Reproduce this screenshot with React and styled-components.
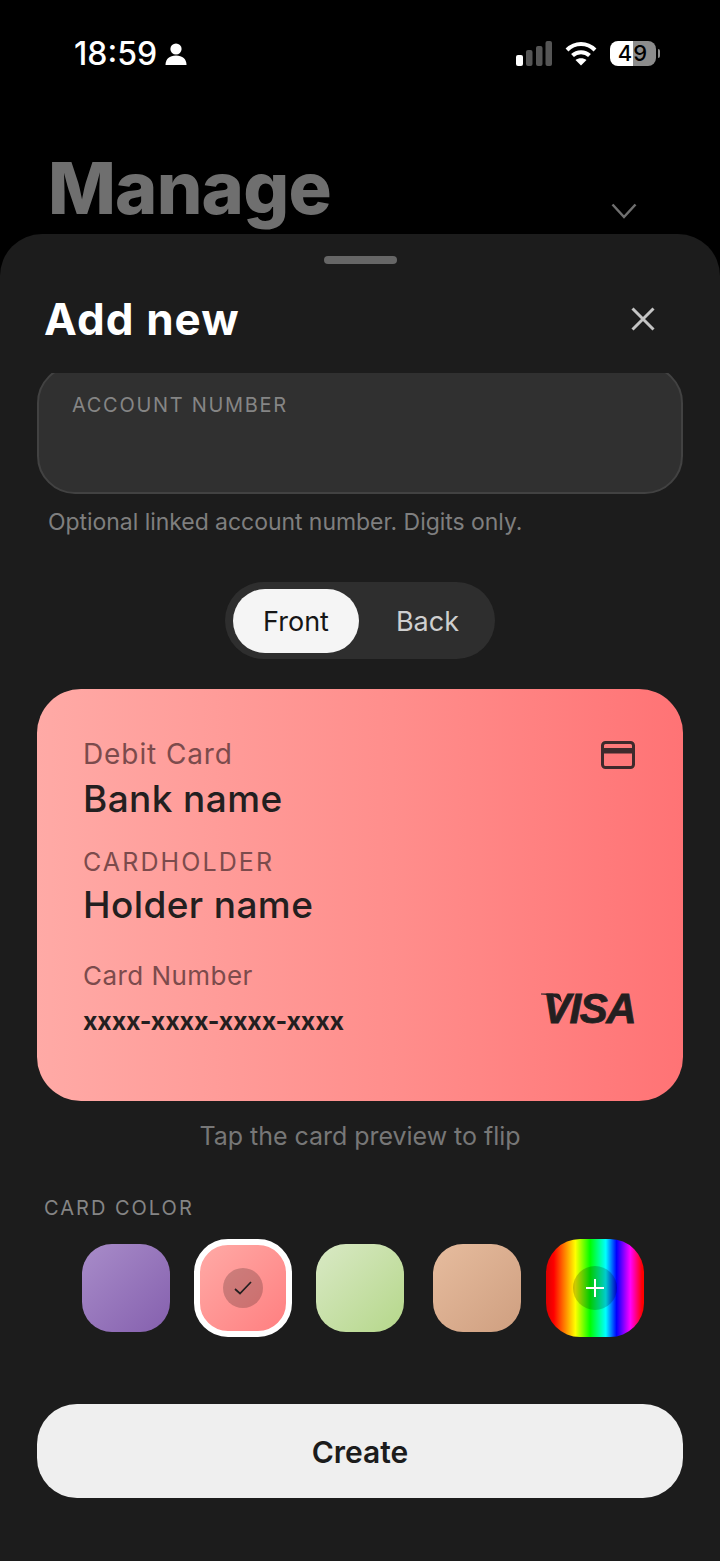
import styled, { createGlobalStyle } from "styled-components";

const GlobalStyle = createGlobalStyle`
  html, body {
    margin: 0;
    padding: 0;
    background: #000;
  }
  * {
    box-sizing: border-box;
  }
`;

const font = `Inter, "Noto Sans", sans-serif`;

const Screen = styled.div`
  position: relative;
  width: 720px;
  height: 1561px;
  overflow: hidden;
  background: #000;
  font-family: ${font};
`;

const StatusBar = styled.div`
  height: 106px;
  padding: 35px 64px 0 74px;
  display: flex;
  align-items: flex-start;
  justify-content: space-between;
`;

const TimeGroup = styled.div`
  display: flex;
  align-items: center;
  gap: 8px;
`;

const Time = styled.span`
  font-size: 32px;
  line-height: 38px;
  font-weight: 500;
  color: #fff;
`;

const StatusIcons = styled.div`
  display: flex;
  align-items: center;
  gap: 13px;
  height: 36px;
`;

const Battery = styled.div`
  position: relative;
  width: 46px;
  height: 25px;
  border-radius: 8px;
  background: linear-gradient(90deg, #fff 0 50%, #8c8c8c 50% 100%);
  color: #000;
  font-size: 22px;
  font-weight: 500;
  line-height: 25px;
  letter-spacing: 1px;
  text-align: center;

  &::after {
    content: "";
    position: absolute;
    right: -4px;
    top: 8px;
    width: 2px;
    height: 9px;
    border-radius: 0 2px 2px 0;
    background: #8c8c8c;
  }
`;

const PageHeader = styled.div`
  padding: 37px 83px 0 48px;
  display: flex;
  justify-content: space-between;
  align-items: flex-end;
`;

const PageTitle = styled.h1`
  margin: 0;
  font-size: 72px;
  line-height: 90px;
  font-weight: 800;
  letter-spacing: -0.800px;
  color: #6f6f6f;
`;

const Chevron = styled.svg`
  margin-bottom: 14px;
`;

const Sheet = styled.div`
  position: absolute;
  top: 234px;
  left: 0;
  right: 0;
  bottom: 0;
  background: #1c1c1c;
  border-radius: 42px 42px 0 0;
  display: flex;
  flex-direction: column;
`;

const Handle = styled.div`
  align-self: center;
  width: 73px;
  height: 8px;
  margin-top: 22px;
  border-radius: 4px;
  background: #666;
`;

const SheetHeader = styled.div`
  display: flex;
  align-items: center;
  justify-content: space-between;
  padding: 28px 65px 0 44px;
`;

const SheetTitle = styled.h2`
  margin: 0;
  font-size: 44px;
  line-height: 54px;
  font-weight: 700;
  letter-spacing: 1.100px;
  color: #fff;
`;

const Scroll = styled.div`
  margin-top: 27px;
  padding: 0 37px;
  overflow: hidden;
  flex: 1;
  display: flex;
  flex-direction: column;
`;

const Field = styled.div`
  height: 129px;
  flex: none;
  margin-top: -8px;
  padding: 26px 33px;
  background: #303030;
  border: 2px solid #424242;
  border-radius: 38px;
`;

const FieldLabel = styled.div`
  font-size: 20px;
  line-height: 24px;
  letter-spacing: 1.700px;
  color: #858585;
`;

const Hint = styled.p`
  margin: 13px 0 0 11px;
  font-size: 23px;
  line-height: 30px;
  letter-spacing: -0.050px;
  color: #7f7f7f;
`;

const Toggle = styled.div`
  align-self: center;
  margin-top: 45px;
  width: 270px;
  height: 77px;
  padding: 7px 8px;
  display: flex;
  align-items: stretch;
  border-radius: 39px;
  background: #2e2e2e;
`;

const ToggleOption = styled.div`
  width: ${(p) => (p.$active ? "126px" : "128px")};
  height: 64px;
  padding-left: ${(p) => (p.$active ? "0" : "9px")};
  border-radius: 32px;
  display: flex;
  align-items: center;
  justify-content: center;
  font-size: 27px;
  background: ${(p) => (p.$active ? "#f5f5f5" : "transparent")};
  color: ${(p) => (p.$active ? "#161616" : "#cfcfcf")};
`;

const Card = styled.div`
  position: relative;
  margin-top: 30px;
  height: 412px;
  flex: none;
  padding: 48px 46px 0;
  border-radius: 44px;
  background: linear-gradient(90deg, #ffaaa6 0%, #ff8e8c 55%, #ff7375 100%);
  color: #231f20;
`;

const CardIcon = styled.svg`
  position: absolute;
  top: 52px;
  right: 48px;
`;

const CardLabel = styled.div`
  font-size: ${(p) => p.$size || 28}px;
  line-height: 34px;
  letter-spacing: ${(p) => p.$spacing || 0}px;
  margin-top: ${(p) => p.$top || 0}px;
  color: #7c4b4c;
`;

const CardValue = styled.div`
  font-size: 37px;
  line-height: 44px;
  font-weight: 500;
  letter-spacing: 0.400px;
  margin-top: ${(p) => p.$top}px;
  color: #231f20;
`;

const CardDigits = styled.div`
  margin-top: 12px;
  font-size: 25px;
  line-height: 32px;
  font-weight: 700;
  letter-spacing: -0.150px;
  color: #231f20;
`;

const VisaMark = styled.div`
  position: absolute;
  right: 48px;
  bottom: 71px;
  height: 42px;
  font-family: "Liberation Sans", Arial, sans-serif;
  font-size: 42px;
  line-height: 42px;
  font-weight: 700;
  font-style: italic;
  letter-spacing: -1.500px;
  -webkit-text-stroke: 0.800px #231f20;
  color: #231f20;
`;

const VisaSwoosh = styled.svg`
  position: absolute;
  left: -2px;
  top: 5px;
`;

const FlipHint = styled.p`
  margin: 19px 0 0;
  text-align: center;
  font-size: 25px;
  line-height: 32px;
  letter-spacing: -0.030px;
  color: #777;
`;

const SectionLabel = styled.div`
  margin: 44px 0 0 7px;
  font-size: 20px;
  line-height: 24px;
  letter-spacing: 2px;
  color: #858585;
`;

const Swatches = styled.div`
  margin: 18px 0 0 30px;
  display: grid;
  grid-template-columns: repeat(5, 117.250px);
  justify-items: center;
  align-items: center;
  height: 100px;
`;

const Swatch = styled.div`
  width: ${(p) => (p.$big ? "98px" : "88px")};
  height: ${(p) => (p.$big ? "98px" : "88px")};
  border-radius: ${(p) => (p.$big ? "34px" : "30px")};
  border: ${(p) => (p.$selected ? "6px solid #fff" : "none")};
  background: ${(p) => p.$fill};
  display: flex;
  align-items: center;
  justify-content: center;
`;

const SwatchBadge = styled.div`
  width: ${(p) => p.$size}px;
  height: ${(p) => p.$size}px;
  border-radius: 50%;
  background: rgba(0, 0, 0, 0.2);
  display: flex;
  align-items: center;
  justify-content: center;
`;

const CreateButton = styled.button`
  position: absolute;
  left: 37px;
  right: 37px;
  bottom: 63px;
  height: 94px;
  padding-top: 3px;
  border: none;
  border-radius: 40px;
  background: #efefef;
  color: #1c1c1c;
  font-family: ${font};
  font-size: 30px;
  font-weight: 600;
`;

const swatches = [
  { fill: "linear-gradient(135deg, #a88cc9, #8560ae)" },
  { fill: "linear-gradient(135deg, #ffaaa6, #ff7f80)", selected: true },
  { fill: "linear-gradient(135deg, #d9e9c5, #b5d78a)" },
  { fill: "linear-gradient(135deg, #e6bc9e, #cf9f80)" },
  {
    fill: "linear-gradient(90deg, #d80000 0%, #ff0000 8%, #ffff00 30%, #00ff00 45%, #00ffff 61%, #0000ff 72%, #ff00ff 86%, #ff0000 98%)",
    rainbow: true,
  },
];

export default function App() {
  return (
    <Screen>
      <GlobalStyle />
      <StatusBar>
        <TimeGroup>
          <Time>18:59</Time>
          <svg width="22" height="22" viewBox="0 0 22 22" fill="#fff">
            <circle cx="11" cy="6" r="5.600" />
            <path d="M0.500 22c0-6 4-9.500 10.500-9.500s10.500 3.500 10.500 9.500z" />
          </svg>
        </TimeGroup>
        <StatusIcons>
          <svg width="36" height="25" viewBox="0 0 36 25">
            <rect x="0" y="14" width="7" height="11" rx="2" fill="#fff" />
            <rect x="10" y="9" width="6.500" height="16" rx="2" fill="#555" />
            <rect x="20" y="5" width="6.500" height="20" rx="2" fill="#555" />
            <rect x="29.500" y="0" width="6.500" height="25" rx="2" fill="#555" />
          </svg>
          <svg width="32" height="25" viewBox="0 0 32 25" fill="none" stroke="#fff" strokeWidth="4">
            <path d="M2 9 C10 1 22 1 30 9" />
            <path d="M7.500 14.500 C12 10 20 10 24.500 14.500" />
            <path d="M16 24.500 L10.500 19 C13.500 16.500 18.500 16.500 21.500 19 Z" fill="#fff" stroke="none" />
          </svg>
          <Battery>49</Battery>
        </StatusIcons>
      </StatusBar>
      <PageHeader>
        <PageTitle>Manage</PageTitle>
        <Chevron width="26" height="16" viewBox="0 0 26 16" fill="none" stroke="#6f6f6f" strokeWidth="2.500">
          <path d="M1.500 1.500 L13 14 L24.500 1.500" />
        </Chevron>
      </PageHeader>

      <Sheet>
        <Handle />
        <SheetHeader>
          <SheetTitle>Add new</SheetTitle>
          <svg width="24" height="24" viewBox="0 0 24 24" stroke="#c4c4c4" strokeWidth="3">
            <path d="M1.500 1.500 L22.500 22.500 M22.500 1.500 L1.500 22.500" />
          </svg>
        </SheetHeader>
        <Scroll>
          <Field>
            <FieldLabel>ACCOUNT NUMBER</FieldLabel>
          </Field>
          <Hint>Optional linked account number. Digits only.</Hint>
          <Toggle>
            <ToggleOption $active>Front</ToggleOption>
            <ToggleOption>Back</ToggleOption>
          </Toggle>
          <Card>
            <CardIcon width="34" height="28" viewBox="0 0 34 28">
              <rect x="1.500" y="1.500" width="31" height="25" rx="3" fill="none" stroke="#3f2a2c" strokeWidth="3" />
              <rect x="2" y="7" width="30" height="5.500" fill="#3f2a2c" />
            </CardIcon>
            <CardLabel $spacing={0.9}>Debit Card</CardLabel>
            <CardValue $top={6}>Bank name</CardValue>
            <CardLabel $size={25} $spacing={2.1} $top={24}>CARDHOLDER</CardLabel>
            <CardValue $top={4}>Holder name</CardValue>
            <CardLabel $size={26} $spacing={0.45} $top={32}>Card Number</CardLabel>
            <CardDigits>xxxx-xxxx-xxxx-xxxx</CardDigits>
            <VisaMark>
              <VisaSwoosh width="22" height="10" viewBox="0 0 24 10" fill="#231f20">
                <path d="M0 0 H17 C20 0 21 1.500 21.500 4 L23 10 C19 5 12 1.500 0 1.200 Z" />
              </VisaSwoosh>
              VISA
            </VisaMark>
          </Card>
          <FlipHint>Tap the card preview to flip</FlipHint>
          <SectionLabel>CARD COLOR</SectionLabel>
          <Swatches>
            {swatches.map((s, i) => (
              <Swatch key={i} $fill={s.fill} $selected={s.selected} $big={s.selected || s.rainbow}>
                {s.selected && (
                  <SwatchBadge $size={40}>
                    <svg width="18" height="14" viewBox="0 0 18 14" fill="none" stroke="#231f20" strokeWidth="1.700">
                      <path d="M1 8 L6 12.500 L17 1" />
                    </svg>
                  </SwatchBadge>
                )}
                {s.rainbow && (
                  <SwatchBadge $size={44}>
                    <svg width="18" height="18" viewBox="0 0 18 18" stroke="#fff" strokeWidth="2">
                      <path d="M9 0 V18 M0 9 H18" />
                    </svg>
                  </SwatchBadge>
                )}
              </Swatch>
            ))}
          </Swatches>
        </Scroll>
        <CreateButton>Create</CreateButton>
      </Sheet>
    </Screen>
  );
}
